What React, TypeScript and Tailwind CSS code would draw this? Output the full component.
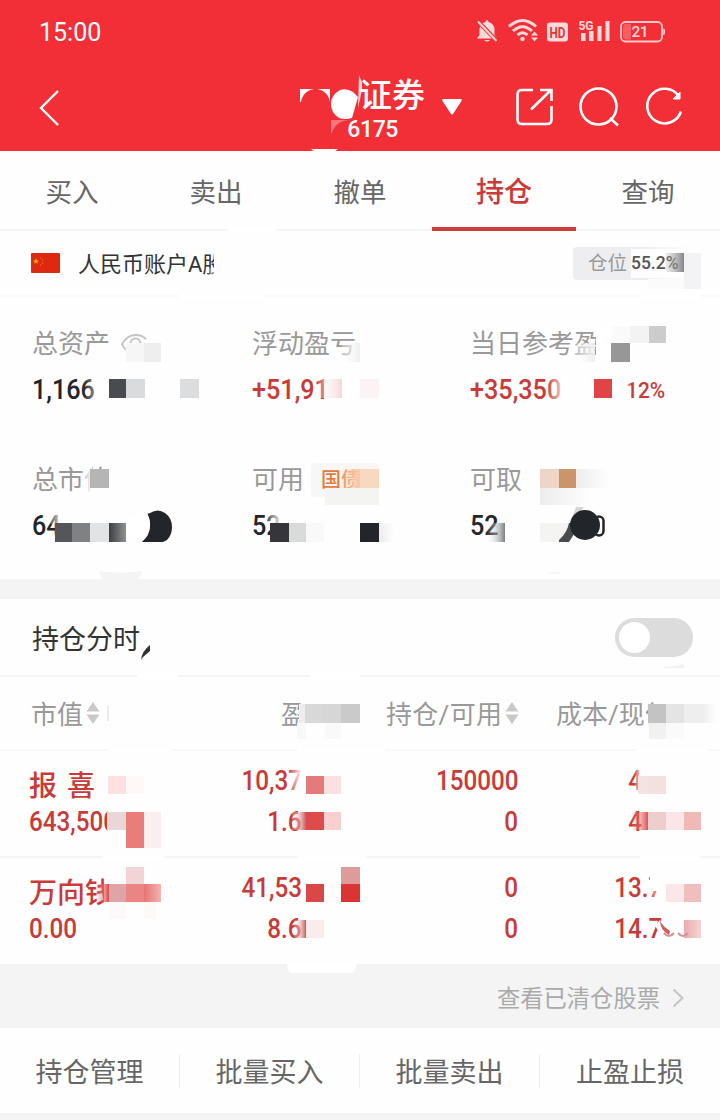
import type { ReactNode } from 'react';

const tabs = ['买入', '卖出', '撤单', '持仓', '查询'];

const actions = ['持仓管理', '批量买入', '批量卖出', '止盈止损'];

const stats = [
  { label: '总资产', value: '1,166', color: 'text-[#22252a]', eye: true },
  { label: '浮动盈亏', value: '+51,91', color: 'text-[#c93a38]' },
  { label: '当日参考盈', value: '+35,350', color: 'text-[#c93a38]', extra: '12%' },
  { label: '总市值', value: '64', color: 'text-[#22252a]' },
  { label: '可用', value: '52', color: 'text-[#22252a]', tag: '国债' },
  { label: '可取', value: '52', color: 'text-[#22252a]' },
];

const holdings = [
  {
    name: '报 喜',
    marketValue: '643,500',
    profit: '10,37',
    rate: '1.6',
    amount: '150000',
    usable: '0',
    cost: '4',
    costTail: '',
    price: '4',
    priceTail: '',
  },
  {
    name: '万向钱',
    marketValue: '0.00',
    profit: '41,53',
    rate: '8.6',
    amount: '0',
    usable: '0',
    cost: '13',
    costTail: '.7',
    price: '14',
    priceTail: '.7',
  },
];

// x, y, width, height, fill
const mosaic: [number, number, number, number, string][] = [
  // account name
  [206, 268, 14, 10, 'url(#fadeWhite)'],
  [214, 250, 14, 28, '#fefefe'],
  // account ratio
  [666, 253, 18, 19, 'url(#fadeGray)'],
  [684, 253, 17, 36, '#f3f3f5'],
  [648, 279, 36, 10, '#fbfbfb'],
  // total assets
  [126, 343, 19, 19, '#f6f6f6'],
  [144, 343, 17, 19, '#eeeeee'],
  [83, 378, 26, 24, 'url(#fadeWhite)'],
  [109, 379, 17, 19, '#484b50'],
  [126, 379, 19, 19, '#dadbdd'],
  [180, 379, 19, 19, '#dcdddf'],
  // floating profit
  [342, 343, 18, 19, 'url(#fadeLight)'],
  [318, 379, 24, 19, 'url(#fadePink)'],
  [342, 375, 14, 25, '#ffffff'],
  [360, 379, 19, 19, '#fcf4f4'],
  // today's profit
  [575, 343, 20, 19, 'url(#fadeLight)'],
  [596, 328, 16, 34, '#ffffff'],
  [612, 326, 18, 17, '#fafafa'],
  [630, 326, 19, 17, '#f3f3f3'],
  [649, 326, 17, 17, '#cccccc'],
  [611, 343, 19, 19, '#979797'],
  [546, 376, 22, 24, 'url(#fadeWhite)'],
  [594, 379, 18, 19, '#e04444'],
  [622, 378, 9, 22, 'url(#fadeWhiteOut)'],
  // market value
  [80, 466, 12, 26, 'url(#fadeWhite)'],
  [90, 469, 19, 19, '#b5b5b5'],
  [91, 488, 19, 8, '#fefefe'],
  [46, 512, 18, 12, 'url(#fadeWhite)'],
  [55, 523, 17, 19, '#55565b'],
  [72, 523, 18, 19, '#7e8284'],
  [90, 523, 19, 19, '#e2e3e4'],
  [109, 523, 17, 19, 'url(#fadeDark)'],
  // usable
  [342, 469, 18, 19, 'url(#fadePeach)'],
  [360, 469, 19, 19, '#f6d9bf'],
  [325, 488, 54, 17, '#f4f4f3'],
  [264, 514, 18, 10, 'url(#fadeWhite)'],
  [270, 523, 19, 19, '#35353b'],
  [289, 523, 17, 19, '#d9dbdb'],
  [306, 523, 18, 19, '#f9f9f9'],
  [360, 523, 19, 19, '#22252a'],
  [379, 523, 16, 19, 'url(#fadeOut)'],
  // withdrawable
  [540, 469, 19, 19, '#edd5c8'],
  [559, 469, 17, 19, '#ca956b'],
  [576, 469, 35, 19, 'url(#fadeOut)'],
  [540, 488, 55, 17, 'url(#fadeOut)'],
  [486, 523, 19, 19, 'url(#fadeSteel)'],
  [540, 523, 19, 19, '#f4f4f2'],
  // table head
  [299, 704, 7, 19, '#ededed'],
  [305, 698, 32, 32, '#fefefe'],
  [305, 704, 18, 19, '#d8d8d8'],
  [323, 704, 18, 19, '#d6d6d6'],
  [341, 704, 19, 19, '#cacaca'],
  [297, 723, 9, 16, '#f8f8f8'],
  [325, 723, 16, 16, '#f9f9f9'],
  [655, 698, 24, 32, '#fefefe'],
  [648, 704, 18, 19, '#c3c3c3'],
  [666, 704, 18, 19, '#e4e4e4'],
  [684, 704, 18, 19, '#eeeeee'],
  [702, 704, 15, 19, 'url(#fadeOut)'],
  [649, 723, 17, 16, '#f1f1f1'],
  [666, 723, 18, 16, '#fafafa'],
  // first holding
  [108, 776, 18, 18, '#ffe0e0'],
  [126, 776, 18, 18, '#fff8f8'],
  [288, 770, 14, 24, 'url(#fadeWhite)'],
  [306, 776, 18, 18, '#e47b7a'],
  [324, 776, 17, 18, '#fae0e0'],
  [108, 808, 18, 28, '#fefefe'],
  [107, 812, 19, 18, '#e9d7d7'],
  [126, 812, 18, 36, '#e97d7a'],
  [144, 812, 17, 36, '#faeeee'],
  [292, 812, 14, 18, 'url(#fadeRose)'],
  [306, 812, 18, 18, '#dd4c4a'],
  [324, 812, 17, 18, '#f9d0cf'],
  [634, 770, 8, 24, 'url(#fadeWhite)'],
  [638, 776, 10, 18, '#f5e3e3'],
  [648, 776, 18, 18, '#f3e0e0'],
  [632, 812, 17, 18, 'url(#fadeRed)'],
  [648, 812, 18, 18, '#eecdcd'],
  [666, 812, 18, 18, '#fae6e6'],
  [684, 812, 17, 18, '#eeb9b7'],
  // second holding
  [104, 876, 14, 34, '#fefefe'],
  [126, 867, 18, 17, '#f3d4d6'],
  [96, 884, 13, 18, 'url(#fadeRed)'],
  [109, 884, 17, 18, '#dfa4a5'],
  [126, 884, 18, 18, '#eb8584'],
  [144, 884, 17, 18, 'url(#fadeRoseOut)'],
  [109, 902, 17, 17, '#fbf9f9'],
  [144, 902, 12, 17, '#fcf9f9'],
  [306, 884, 18, 18, '#d94846'],
  [341, 867, 19, 17, '#dd9b9a'],
  [341, 884, 19, 18, '#db3533'],
  [294, 920, 12, 18, 'url(#fadeRose)'],
  [306, 920, 18, 18, '#fbecec'],
  [650, 875, 16, 16, '#fefefe'],
  [648, 884, 18, 18, 'url(#fadeWhite)'],
  [666, 884, 18, 18, '#fae7e7'],
  [684, 884, 17, 18, '#efbebd'],
  [684, 920, 17, 18, 'url(#fadeRoseOut2)'],
];

function Num({ children, className = '' }: { children: ReactNode; className?: string }) {
  return <span className={`inline-block font-medium whitespace-nowrap ${className}`}>{children}</span>;
}

function Gradient({ id, from, to, a = 1, b = 1 }: { id: string; from: string; to: string; a?: number; b?: number }) {
  return (
    <linearGradient id={id}>
      <stop offset="0" stopColor={from} stopOpacity={a} />
      <stop offset="1" stopColor={to} stopOpacity={b} />
    </linearGradient>
  );
}

// Privacy mosaic that hides the amounts
function Mosaic() {
  return (
    <svg className="absolute inset-0 pointer-events-none" width="720" height="1120" viewBox="0 0 720 1120">
      <defs>
        <Gradient id="fadeGray" from="#aaaaaa" to="#858585" a={0.2} />
        <Gradient id="fadeWhite" from="#ffffff" to="#ffffff" a={0} />
        <Gradient id="fadeWhiteOut" from="#ffffff" to="#ffffff" b={0.2} />
        <Gradient id="fadeLight" from="#ffffff" to="#eeeeee" a={0.3} />
        <Gradient id="fadePink" from="#ffffff" to="#f5d7d8" a={0.2} />
        <Gradient id="fadePeach" from="#f8dcc8" to="#f9c9a4" a={0.3} />
        <Gradient id="fadeDark" from="#3c4043" to="#8f9191" />
        <Gradient id="fadeOut" from="#ededed" to="#ffffff" />
        <Gradient id="fadeSteel" from="#ffffff" to="#7c8083" a={0} />
        <Gradient id="fadeRose" from="#ffffff" to="#c95a58" a={0.2} />
        <Gradient id="fadeRed" from="#f0a5a5" to="#d94543" a={0.1} />
        <Gradient id="fadeRoseOut" from="#e87472" to="#f3b3b1" />
        <Gradient id="fadeRoseOut2" from="#ebaaaa" to="#f6d5d5" />
      </defs>

      {/* Title */}
      <g fill="#fff">
        <path d="M300 89h14c-7 1-12 6-13 13h-1z" />
        <path d="M317 89h13v13c-1-7-6-12-13-13z" />
        <path d="M340 90q7-2 13 2l5 5-6 21q-7 2-13 0-8-5-8-14t9-14z" />
        <path d="M331 120h20q-15 0-19 13h-1z" opacity=".35" />
        <path d="M359 75q2 5 3 7v8l-4 18z" opacity=".8" />
        <path d="M311 149h27l-4 3h-19z" />
      </g>

      {/* Gaps in the divider lines */}
      <g fill="#fff">
        <rect x="228" y="228" width="48" height="4" />
        <rect x="180" y="295" width="85" height="4" />
        <rect x="640" y="295" width="60" height="4" />
        <rect x="137" y="675" width="41" height="4" />
        <rect x="310" y="675" width="50" height="4" />
        <rect x="108" y="749" width="64" height="4" />
        <rect x="297" y="749" width="88" height="4" />
        <rect x="637" y="749" width="70" height="4" />
        <rect x="102" y="856" width="62" height="4" />
        <rect x="298" y="856" width="68" height="4" />
        <rect x="640" y="856" width="60" height="4" />
        <path d="M287 964h70q-2 9-6 9h-58q-5 0-6-9z" />
      </g>
      <path d="M99 571q22 3 44 0-3 5-6 9h-34z" fill="#f4f4f4" />
      <path d="M548 571q8 3 13 0l-3 3h-8z" fill="#f4f4f4" />
      <path d="M664 667q10 0 20-3v4h-20z" fill="#f1f1f1" />
      <rect x="107" y="706" width="2" height="15" fill="#ebebeb" />

      {mosaic.map(([x, y, w, h, fill], i) => (
        <rect key={i} x={x} y={y} width={w} height={h} fill={fill} />
      ))}

      {/* Brush marks */}
      <path d="M150 513q8-5 15 0 7 5 7 14 0 8-5 13l-4 2h-21q8-7 8-16 0-7-3-12z" fill="#22252a" />
      <path d="M126 522q6-9 20-10 4 5 4 13t-10 16q-10-1-14-10z" fill="#fff" />
      <path d="M559 523h17v8l-7 11h-10z" fill="#484b50" />
      <path d="M559 523h10q-2 10-10 17z" fill="#f4f4f2" />
      <path d="M576 507h8l-12 16v-5z" fill="#d5d5d5" />
      <circle cx="585" cy="525" r="15" fill="#22252a" />
      <rect x="594.5" y="516.5" width="9" height="19" rx="4.5" fill="none" stroke="#22252a" strokeWidth="2.5" />
      <path d="M150 645v6l-7 6-2 3q1-9 9-15z" fill="#333" />
      <path d="M660 920q2 6 9 10l-5 6q-7-5-9-11z" fill="#fff" />
      <path d="M660 920q2 6 10 11l-1 4q-9-5-9-15z" fill="#d25b59" />
      <path d="M664 933q5 6 10 0M678 933q5 6 10 0" fill="none" stroke="#d79391" strokeWidth="2" />
    </svg>
  );
}

function StatusIcons() {
  return (
    <svg width="190" height="26" viewBox="475 18 190 26" fill="#ffdada">
      {/* Muted bell */}
      <path d="M487 20q1.500 0 1.500 2c4 1 6 4 6 8v5l2.500 3.500H477l2.500-3.500v-5c0-4 2-7 6-8q0-2 1.500-2z" />
      <path d="M484 40h6q-3 3-6 0z" />
      <path d="M477 20.500L497 41" stroke="#f22f37" strokeWidth="4" />
      <path d="M478 21.500L496.500 41" stroke="#ffdada" strokeWidth="2" />
      {/* Wifi */}
      <g fill="none" stroke="#ffdada" strokeWidth="3">
        <path d="M509 26.500q13.500-12 27 0" />
        <path d="M513 31q9.500-8.500 19 0" />
        <path d="M517.500 35q5-4.500 10 0" />
      </g>
      <circle cx="522.500" cy="39" r="2.200" />
      <path d="M534.500 31.500l3.500 4h-7zM534.500 41.500l3.500-4h-7z" />
      {/* HD */}
      <rect x="547" y="22.500" width="21" height="19" rx="3" />
      <text x="549.500" y="37.500" fontSize="15" fontWeight="700" fill="#e2353b" textLength="16" lengthAdjust="spacingAndGlyphs">
        HD
      </text>
      {/* Signal */}
      <text x="578.500" y="30" fontSize="13.500" fontWeight="700" textLength="15" lengthAdjust="spacingAndGlyphs">
        5G
      </text>
      <path d="M581 33h4.500v8H581zM589 31h4.500v10H589zM597.500 26h4v15h-4zM605.500 21h4v20h-4z" />
      {/* Battery */}
      <rect x="621" y="22" width="41" height="19.500" rx="4.500" fill="none" stroke="#ffc9ca" strokeWidth="1.800" />
      <path d="M623 28q0-4 3-4h5v15.500h-5q-3 0-3-4z" fill="#fa5c62" />
      <path d="M663.300 28.500q1.700 0 1.700 3.300t-1.700 3.300z" />
      <text x="631.500" y="37" fontSize="15.500" fontWeight="500" textLength="17" lengthAdjust="spacing">
        21
      </text>
    </svg>
  );
}

function SortIcon() {
  return (
    <svg className="-mt-1" width="14" height="24" viewBox="0 0 14 24" fill="#c9c9c9">
      <path d="M7 1l6.500 9.500H.5zM7 23l6.500-9.500H.5z" />
    </svg>
  );
}

export default function App() {
  return (
    <div className="relative w-[720px] h-[1120px] overflow-hidden bg-[#fefefe] font-['Roboto','Noto_Sans_CJK_SC',sans-serif]">
      {/* Header */}
      <header className="h-[151px] bg-[#f22f37] text-white">
        <div className="h-[62px] pl-[39px] pr-[55px] flex items-center justify-between">
          <span className="text-[25px] leading-none pt-0.5">15:00</span>
          <StatusIcons />
        </div>
        <div className="h-[89px] pl-[38px] pr-[35px] flex items-center">
          <svg width="22" height="38" viewBox="0 0 22 38" fill="none" stroke="white" strokeWidth="2.400">
            <path d="M20 3L3 20l17 17" />
          </svg>
          <div className="ml-[239px] w-[126px] pt-[5px] text-right">
            <div className="text-[33px] leading-[40px] font-medium">证券</div>
            <div className="pr-[27px] text-[23px] leading-[27px] font-medium">
              <span className="tracking-[-0.4px]">6175</span>
            </div>
          </div>
          <svg className="ml-4" width="22" height="18" viewBox="0 0 22 18" fill="white">
            <path d="M2.500 1h17q2 0 1 2l-8.500 13q-1 1-2 0L1.500 3q-1-2 1-2z" />
          </svg>
          <div className="ml-auto flex items-center gap-[26px]">
            <svg width="38" height="40" viewBox="514 88 38 40" fill="none" stroke="white" strokeWidth="2.600">
              <path d="M532 91h-11q-4.500 0-4.500 4.500v25q0 4.500 4.500 4.500h25q4.500 0 4.500-4.500V107" />
              <path d="M530 110.500L549.500 91.500M539 91h11.500v11" />
            </svg>
            <svg width="40" height="40" viewBox="579 87 40 40" fill="none" stroke="white" strokeWidth="2.600">
              <circle cx="598.500" cy="106.500" r="18" />
              <path d="M610 118l8 7.500" />
            </svg>
            <svg width="40" height="40" viewBox="646 87 40 40" fill="none" stroke="white" strokeWidth="2.600">
              <path d="M680 96.500a17.300 17.300 0 1 0 2 15" />
              <path d="M681 92v7h-7z" fill="white" stroke="white" strokeWidth="1" />
            </svg>
          </div>
        </div>
      </header>

      {/* Tabs */}
      <nav className="h-20 grid grid-cols-5 border-b-2 border-[#f6f6f6]">
        {tabs.map((tab) => (
          <button
            key={tab}
            className={
              tab === '持仓'
                ? '-mb-0.5 pt-2 border-b-[4px] border-[#cb3d3c] text-[#c93a38] text-[28px] font-medium'
                : 'pt-2 text-[#666] text-[26.500px] border-b-2 border-transparent'
            }
          >
            {tab}
          </button>
        ))}
      </nav>

      {/* Account */}
      <section className="h-[66px] pl-[31px] pr-[29px] flex items-center border-b-2 border-[#fafafa]">
        <svg width="29" height="20" viewBox="0 0 29 20">
          <rect width="29" height="20" rx="1" fill="#de2910" />
          <path d="M5 5.500l.9 2h2l-1.600 1.300.6 2L5 9.600l-1.900 1.200.6-2L2.100 7.500h2z" fill="#ffb400" />
          <g fill="#f06a12">
            <circle cx="9.500" cy="5" r=".8" />
            <circle cx="11.500" cy="7" r=".8" />
            <circle cx="11.500" cy="10" r=".8" />
            <circle cx="9.500" cy="12" r=".8" />
          </g>
        </svg>
        <div className="ml-[18px] pt-[3px] whitespace-nowrap text-[22px] leading-8 text-[#333]">人民币账户A股</div>
        <div className="ml-auto w-[118px] h-[33px] pl-[15px] flex items-center rounded-sm bg-gradient-to-r from-[#eeeef0] from-60% to-[#fefefe] text-[#999] text-[19.500px] whitespace-nowrap">
          <span className="pt-0.5">仓位</span>
          <span className="ml-1 h-[29px] w-[52px] flex items-center bg-white/90">
            <Num className="text-[19px] text-[#555] origin-left scale-x-[0.92]">55.2%</Num>
          </span>
        </div>
      </section>

      {/* Assets */}
      <section className="h-[282px] pt-8 pl-8 grid grid-cols-[220px_218px_1fr] auto-rows-[76px] gap-y-[60px]">
        {stats.map((item) => (
          <div key={item.label}>
            <div className="h-[30px] flex items-center text-[26px] leading-[30px] text-[#999] whitespace-nowrap">
              {item.label}
              {item.eye && (
                <svg className="ml-2.5" width="32" height="22" viewBox="0 0 32 22" fill="none" stroke="#c4c4c4" strokeWidth="2">
                  <path d="M9 18.500Q4 16 2 11 7 2 16 2q6 0 10 4" />
                  <circle cx="15.500" cy="10.500" r="5" />
                </svg>
              )}
              {item.tag && (
                <span className="ml-[7px] h-[34px] w-[68px] pl-2.5 rounded bg-[#f8f7f6] text-[20px] leading-[34px] font-medium text-[#e47a3c]">
                  {item.tag}
                </span>
              )}
            </div>
            <div className={`mt-4 h-[30px] leading-[30px] text-[28px] flex items-center ${item.color}`}>
              <Num className="origin-left scale-x-[0.9]">{item.value}</Num>
              {item.extra && <Num className="ml-[55px] pt-0.5 text-[22px] origin-left scale-x-95">{item.extra}</Num>}
            </div>
          </div>
        ))}
      </section>

      <div className="h-5 bg-[#f4f4f4]" />

      {/* Intraday switch */}
      <section className="h-[78px] pl-8 pr-[27px] flex items-center justify-between border-b-2 border-[#f5f5f5]">
        <span className="text-[27px] text-[#333] pt-[7px]">持仓分时</span>
        <button className="w-[78px] h-[39px] rounded-full bg-[#dcdcdc] pl-1 flex items-center">
          <span className="w-[31px] h-[31px] rounded-full bg-white" />
        </button>
      </section>

      {/* Table head */}
      <div className="h-[74px] pt-1 pl-[31px] grid grid-cols-[250px_105px_170px_1fr] items-center border-b-2 border-[#f8f8f8] text-[26px] text-[#999] whitespace-nowrap">
        <div className="flex items-center gap-[3px]">
          市值
          <SortIcon />
        </div>
        <div>盈亏</div>
        <div className="flex items-center gap-[3px]">
          <span className="tracking-[0.3px]">持仓/可用</span>
          <SortIcon />
        </div>
        <div>成本/现价</div>
      </div>

      {/* Holdings */}
      {holdings.map((item, i) => (
        <div
          key={item.name}
          className={`pl-[29px] grid grid-cols-[172px_101px_216px_124px] text-[28px] text-[#c93a38] ${
            i === 0 ? 'h-[107px] border-b-2 border-[#f5f5f5]' : 'h-[106px]'
          }`}
        >
          <div className="pt-[18px] flex flex-col items-start">
            <div className="h-[38px] leading-[36px] text-[28px] font-medium [word-spacing:3px] whitespace-nowrap">
              {item.name}
            </div>
            <Num className="leading-[30px] origin-left scale-x-[0.865]">{item.marketValue}</Num>
          </div>
          <div className="pt-[15px] flex flex-col items-end gap-[11px]">
            <Num className="leading-[30px] origin-right scale-x-[0.865]">{item.profit}</Num>
            <Num className="leading-[30px] origin-right scale-x-[0.865]">{item.rate}</Num>
          </div>
          <div className="pt-[15px] flex flex-col items-end gap-[11px]">
            <Num className="leading-[30px] origin-right scale-x-[0.865]">{item.amount}</Num>
            <Num className="leading-[30px] origin-right scale-x-[0.865]">{item.usable}</Num>
          </div>
          <div className="pt-[15px] flex flex-col items-end gap-[11px]">
            <Num className="leading-[30px] origin-right scale-x-[0.865]">
              {item.cost}
              <span className="inline-flex w-0">{item.costTail}</span>
            </Num>
            <Num className="leading-[30px] origin-right scale-x-[0.865]">
              {item.price}
              <span className="inline-flex w-0">{item.priceTail}</span>
            </Num>
          </div>
        </div>
      ))}

      {/* Closed positions */}
      <div className="h-[64px] bg-[#f4f4f4] pr-9 pt-1 flex items-center justify-end gap-3 text-[23.300px] text-[#aaa]">
        <span className="pt-0.5">查看已清仓股票</span>
        <svg width="12" height="20" viewBox="0 0 12 20" fill="none" stroke="#c4c4c4" strokeWidth="2">
          <path d="M1.500 1.500l9 8.500-9 8.500" />
        </svg>
      </div>

      {/* Bottom actions */}
      <footer className="h-[85px] grid grid-cols-4 items-center text-[27px] text-[#666]">
        {actions.map((action) => (
          <button key={action} className="h-[34px] pt-1 leading-[30px] border-r border-[#eee] last:border-r-0">
            {action}
          </button>
        ))}
      </footer>
      <div className="h-2 bg-[#f4f4f4]" />

      <Mosaic />
    </div>
  );
}
